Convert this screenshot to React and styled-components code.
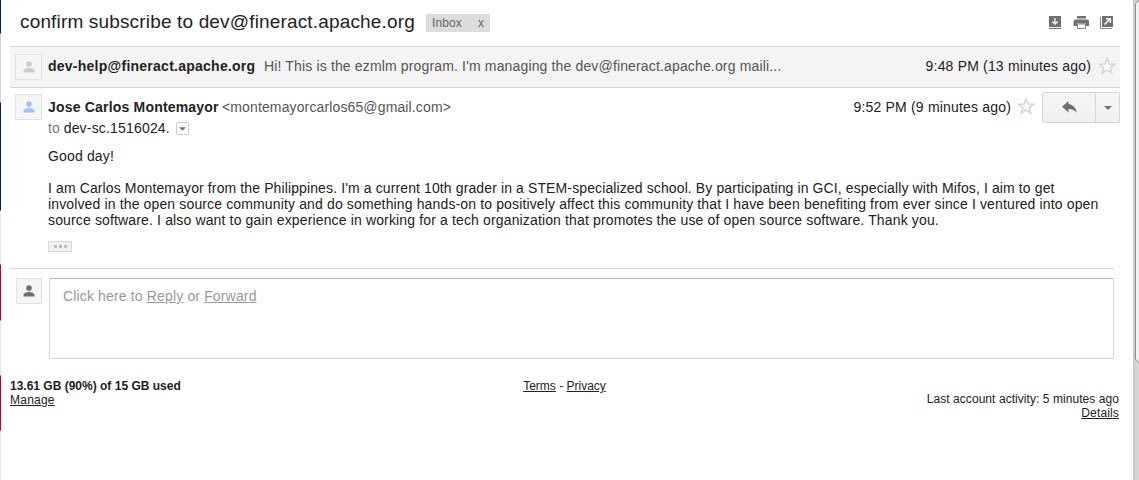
import React from 'react';
import styled, { createGlobalStyle } from 'styled-components';

const Global = createGlobalStyle`
  * { box-sizing: border-box; }
  body { margin: 0; background: #fff; overflow: hidden; }
`;

const Page = styled.div`
  display: flex;
  width: 1139px;
  height: 480px;
  overflow: hidden;
  background: #fff;
  color: #222;
  font: 14px/16px "Liberation Sans", Arial, sans-serif;
`;

const Edge = styled.div`
  width: 1px;
  background: linear-gradient(
    #00205f 0 33px, #d3d3d3 34px 102px, #00205f 103px 210px, #e8e8e8 211px 264px,
    #b4002f 265px 320px, #e8e8e8 321px 375px, #b4002f 376px 430px, #e8e8e8 431px
  );
`;

const Main = styled.main`
  width: 1132px;
  padding-left: 9px;
`;

const Scrollbar = styled.div`
  width: 6px;
  height: 480px;
  background: linear-gradient(90deg, #c3c3c3, #d2d2d2 2px, #dcdcdc);
  padding-left: 2px;
  overflow: hidden;
`;

const Thumb = styled.div`
  width: 14px;
  height: 363px;
  border: 1px solid #8c8c8c;
  border-radius: 5px;
  background: linear-gradient(90deg, #fafafa, #e4e4e4 4px);
`;

const Header = styled.header`
  display: flex;
  align-items: flex-start;
  width: 1110px;
  height: 46px;
  padding-left: 10px;
`;

const Subject = styled.h1`
  margin: 10px 0 0;
  width: 406px;
  font-size: 19px;
  line-height: 24px;
  font-weight: 400;
  letter-spacing: 0.16px;
  white-space: nowrap;
`;

const Label = styled.div`
  display: flex;
  justify-content: space-between;
  width: 64px;
  height: 18px;
  margin-top: 14px;
  padding: 0 6px;
  background: #ddd;
  color: #666;
  font-size: 12px;
  line-height: 18px;
  letter-spacing: 0.1px;
`;

const Tools = styled.div`
  display: flex;
  gap: 9px;
  margin: 14px 6px 0 auto;
`;

const Icon = styled.svg`
  display: block;
  flex: none;
`;

const Row = styled.div`
  display: flex;
  align-items: flex-start;
  width: 1110px;
  height: ${(p) => p.$height}px;
  padding: ${(p) => p.$top}px 0 0 5px;
  ${(p) => p.$collapsed && 'background: #f4f4f4; border: solid #d5d5d5; border-width: 1px 0;'}
`;

const Avatar = styled.div`
  display: flex;
  justify-content: center;
  align-items: center;
  flex: none;
  width: ${(p) => p.$width || 27}px;
  height: 26px;
  border: 1px solid #e2e2e2;
  background: #f5f5f5;
`;

const Copy = styled.div`
  margin: ${(p) => p.$top}px 0 0 6px;
  white-space: nowrap;
`;

const Sender = styled.b`
  display: inline-block;
  width: ${(p) => p.$width}px;
  letter-spacing: ${(p) => p.$spacing || 0}px;
`;

const Muted = styled.span`
  color: ${(p) => p.$color || '#555'};
  letter-spacing: ${(p) => p.$spacing || 0}px;
`;

const Time = styled.time`
  margin: ${(p) => p.$top}px ${(p) => p.$right}px 0 auto;
  letter-spacing: 0.18px;
  white-space: nowrap;
`;

const StarBox = styled.div`
  margin: ${(p) => p.$top}px ${(p) => p.$right}px 0 0;
`;

const Recipient = styled.div`
  display: flex;
  margin-top: 5px;
  gap: 4px;
`;

const Address = styled.span`
  width: 106px;
  letter-spacing: 0.18px;
`;

const DetailsToggle = styled.button`
  display: flex;
  align-items: center;
  justify-content: center;
  width: 13px;
  height: 13px;
  margin: 2px 0 0 2px;
  padding: 0;
  border: 1px solid #ccc;
  border-radius: 1px;
  background: #fff;
`;

const ReplyButton = styled.div`
  display: flex;
  width: 78px;
  height: 31px;
  margin-top: -2px;
  border: 1px solid #d5d5d5;
  border-radius: 2px;
  background: linear-gradient(#f6f6f6, #f0f0f0);
`;

const ButtonPart = styled.button`
  display: flex;
  align-items: center;
  justify-content: center;
  width: ${(p) => p.$width}px;
  padding: 0;
  border: 0;
  border-right: ${(p) => (p.$divided ? '1px solid #d5d5d5' : '0')};
  background: none;
`;

const Body = styled.article`
  width: 1104px;
  height: 121px;
  padding-left: 38px;
  border-bottom: 1px solid #d5d5d5;
`;

const Paragraph = styled.p`
  margin: 0 0 16px;
  white-space: nowrap;
`;

const Line = styled.span`
  display: block;
  letter-spacing: ${(p) => p.$spacing}px;
`;

const Ellipsis = styled.div`
  display: flex;
  align-items: center;
  justify-content: center;
  gap: 2px;
  width: 24px;
  height: 11px;
  margin-top: -3px;
  border: 1px solid #d9d9d9;
  background: #f1f1f1;
`;

const Dot = styled.i`
  width: 3px;
  height: 3px;
  border-radius: 1px;
  background: #b8b8b8;
`;

const Composer = styled.section`
  display: flex;
  gap: 7px;
  padding: 9px 0 0 6px;
`;

const ReplyBox = styled.div`
  width: 1065px;
  height: 81px;
  padding: 9px 13px;
  border: 1px solid #d5d5d5;
  border-top-color: #bdbdbd;
  border-radius: 1px;
  color: #999;
  letter-spacing: 0.15px;
`;

const Footer = styled.footer`
  display: grid;
  grid-template-columns: 1fr auto 1fr;
  width: 1109px;
  padding-top: 20px;
  font-size: 12px;
  line-height: 14px;
`;

const Activity = styled.div`
  padding-top: 13px;
  letter-spacing: 0.06px;
  text-align: right;
`;

const Link = styled.span`
  text-decoration: underline;
  ${(p) => p.$spacing && `letter-spacing: ${p.$spacing}px;`}
`;

const Person = ({ color }) => (
  <Icon width="12" height="12" viewBox="0 0 12 12" fill={color}>
    <circle cx="6" cy="3.1" r="2.8" />
    <path d="M.5 11.5V10C.5 8 3.7 7 6 7s5.500 1 5.500 3v1.500z" />
  </Icon>
);

const Star = () => (
  <Icon width="18" height="18" viewBox="0 0 18 18">
    <path d="M9 1.500l2 5.400 5.800.2-4.600 3.500 1.600 5.600L9 13l-4.800 3.200 1.600-5.600L1.200 7.100 7 6.900z" fill="#fbfbfb" stroke="#d5d5d5" strokeWidth="1.500" />
  </Icon>
);

const Caret = ({ width = 8, height = 4 }) => (
  <Icon width={width} height={height} viewBox="0 0 8 4"><path d="M0 0h8L4 4z" fill="#707070" /></Icon>
);

export default function App() {
  return (
    <>
      <Global />
      <Page>
        <Edge />
        <Main>
          <Header>
            <Subject>confirm subscribe to dev@fineract.apache.org</Subject>
            <Label><span>Inbox</span><span>x</span></Label>
            <Tools>
              <Icon width="17" height="17" viewBox="0 0 17 17">
                <path d="M3 2h12v11H3zM3 14h12v1H3z" fill="#707070" />
                <path d="M9 4v6M6.300 7.500L9 10.200l2.700-2.700" fill="none" stroke="#fff" strokeWidth="1.300" />
              </Icon>
              <Icon width="18" height="17" viewBox="0 0 18 17" fill="#707070">
                <path d="M5 2h9v2.500H5zM4 5.500h11c1.300 0 2 .8 2 2V12h-3V9.500H5V12H1.500V7.500c0-1.200.9-2 2.500-2z" />
                <path d="M5.500 10h8v4.500h-8z" fill="#fff" stroke="#858585" />
              </Icon>
              <Icon width="15" height="17" viewBox="1 0 15 17">
                <path d="M4 2h11v11H4z" fill="#707070" />
                <path d="M2.500 3v11.500H14" fill="none" stroke="#858585" />
                <path d="M6.500 10.500l5-5M8 4.700h4.300V9" fill="none" stroke="#fff" strokeWidth="1.500" />
              </Icon>
            </Tools>
          </Header>

          <Row $collapsed $height={42} $top={7}>
            <Avatar><Person color="#ccc" /></Avatar>
            <Copy $top={4}>
              <Sender $width={216} $spacing={0.25}>dev-help@fineract.apache.org</Sender>
              <Muted $spacing={0.15}>Hi! This is the ezmlm program. I'm managing the dev@fineract.apache.org maili...</Muted>
            </Copy>
            <Time $top={4} $right={7}>9:48 PM (13 minutes ago)</Time>
            <StarBox $top={3} $right={4}><Star /></StarBox>
          </Row>

          <Row $height={60} $top={6}>
            <Avatar><Person color="#a4c2f4" /></Avatar>
            <Copy $top={5}>
              <div>
                <Sender $width={174} $spacing={0.19}>Jose Carlos Montemayor</Sender>
                <Muted $spacing={0.13}>&lt;montemayorcarlos65@gmail.com&gt;</Muted>
              </div>
              <Recipient>
                <Muted $color="#777">to</Muted>
                <Address>dev-sc.1516024.</Address>
                <DetailsToggle aria-label="Show details"><Caret width={7} /></DetailsToggle>
              </Recipient>
            </Copy>
            <Time $top={5} $right={6}>9:52 PM (9 minutes ago)</Time>
            <StarBox $top={3} $right={7}><Star /></StarBox>
            <ReplyButton>
              <ButtonPart $width={53} $divided aria-label="Reply">
                <Icon width="15" height="13" viewBox="0 0 15 13" fill="#707070">
                  <path d="M6.500 0v3c4.500.5 7.500 4 8.500 9-2.500-3-4.500-4-8.500-4v3.500L0 5.700z" />
                </Icon>
              </ButtonPart>
              <ButtonPart $width={23} aria-label="More"><Caret /></ButtonPart>
            </ReplyButton>
          </Row>

          <Body>
            <Paragraph><Line $spacing={0.15}>Good day!</Line></Paragraph>
            <Paragraph>
              <Line $spacing={0.117}>I am Carlos Montemayor from the Philippines. I'm a current 10th grader in a STEM-specialized school. By participating in GCI, especially with Mifos, I aim to get</Line>
              <Line $spacing={0.138}>involved in the open source community and do something hands-on to positively affect this community that I have been benefiting from ever since I ventured into open</Line>
              <Line $spacing={0.145}>source software. I also want to gain experience in working for a tech organization that promotes the use of open source software. Thank you.</Line>
            </Paragraph>
            <Ellipsis><Dot /><Dot /><Dot /></Ellipsis>
          </Body>

          <Composer>
            <Avatar $width={26}><Person color="#707070" /></Avatar>
            <ReplyBox>Click here to <Link>Reply</Link> or <Link>Forward</Link></ReplyBox>
          </Composer>

          <Footer>
            <div>
              <b>13.61 GB (90%) of 15 GB used</b><br />
              <Link $spacing={0.23}>Manage</Link>
            </div>
            <div><Link>Terms</Link> - <Link>Privacy</Link></div>
            <Activity>
              Last account activity: 5 minutes ago<br />
              <Link $spacing={0.15}>Details</Link>
            </Activity>
          </Footer>
        </Main>
        <Scrollbar><Thumb /></Scrollbar>
      </Page>
    </>
  );
}
